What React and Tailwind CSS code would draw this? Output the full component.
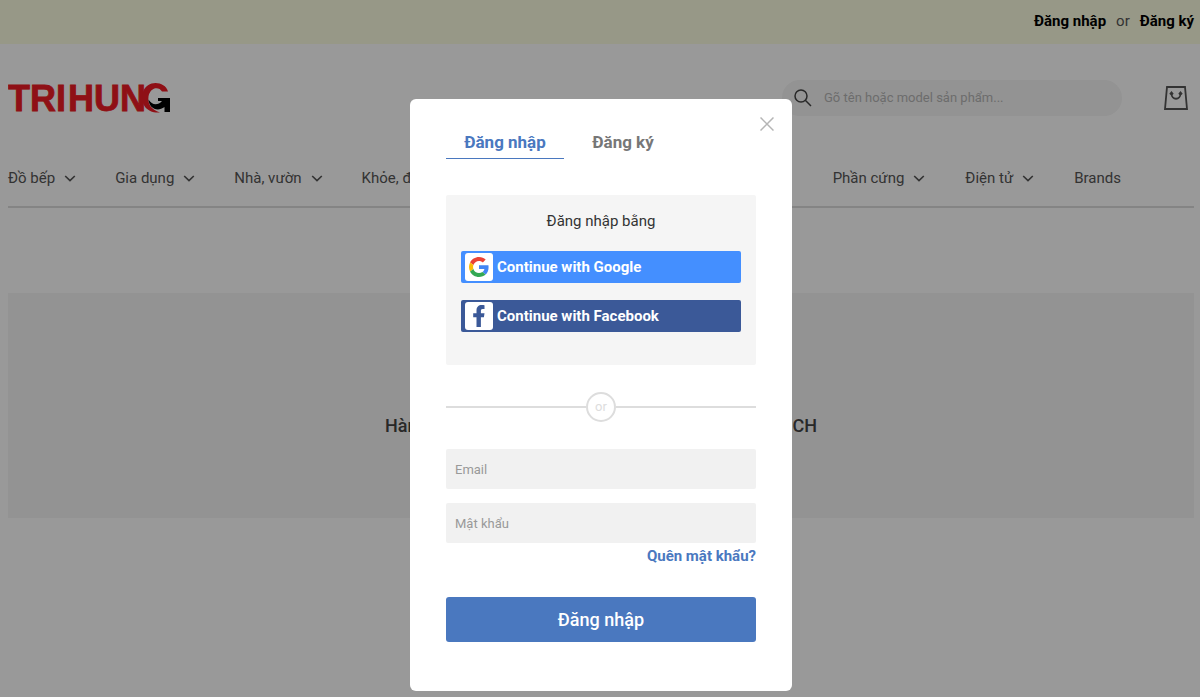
import React, { useState } from 'react';

const leftMenu = ['Đồ bếp', 'Gia dụng', 'Nhà, vườn', 'Khỏe, đẹp'];
const rightMenu = ['Phần cứng', 'Điện tử'];

function Chevron() {
  return (
    <svg className="w-3 h-3 shrink-0" viewBox="0 0 12 12" fill="none" stroke="currentColor" strokeWidth="1.6">
      <path d="M1.2 4 6 8.600l4.800-4.600" />
    </svg>
  );
}

function Logo() {
  return (
    <svg className="w-[164px] h-10" viewBox="0 0 164 40" role="img" aria-label="Tri Hung">
      <g
        fontFamily="'Liberation Sans', sans-serif"
        fontWeight="700"
        fontSize="36"
        fill="#ee1c25"
        stroke="#ee1c25"
        strokeWidth="0.8"
      >
        <text x="0" y="33">TRI</text>
        <text x="60" y="33">HUN</text>
      </g>
      <path d="M160 13.500C157 3 139 1.500 135 14C131.500 26 139 35.500 152 34.500C143 31.500 139.500 26 140.500 18.500C142 9 151 8 154 13.500Z" fill="#ee1c25" />
      <path d="M140.500 21.500C141 30 149 34.500 156.500 29V34H162V20H150V23H154C150 27.500 144 27.500 140.500 21.500Z" fill="#000" />
    </svg>
  );
}

function GoogleIcon() {
  return (
    <svg className="w-5 h-5" viewBox="0 0 48 48">
      <path fill="#EA4335" d="M24 9.500c3.540 0 6.710 1.220 9.210 3.600l6.850-6.850C35.900 2.380 30.470 0 24 0 14.620 0 6.510 5.380 2.560 13.220l7.980 6.190C12.430 13.720 17.740 9.500 24 9.500z" />
      <path fill="#4285F4" d="M46.980 24.550c0-1.570-.15-3.090-.38-4.550H24v9.020h12.940c-.58 2.960-2.260 5.480-4.780 7.180l7.730 6c4.510-4.180 7.090-10.360 7.090-17.650z" />
      <path fill="#FBBC05" d="M10.530 28.590c-.48-1.450-.76-2.990-.76-4.590s.27-3.140.76-4.590l-7.980-6.190C.92 16.460 0 20.120 0 24c0 3.880.92 7.540 2.560 10.780l7.970-6.190z" />
      <path fill="#34A853" d="M24 48c6.480 0 11.930-2.130 15.890-5.810l-7.730-6c-2.150 1.450-4.920 2.300-8.160 2.300-6.260 0-11.570-4.220-13.470-9.910l-7.980 6.190C6.510 42.620 14.620 48 24 48z" />
    </svg>
  );
}

function FacebookIcon() {
  return (
    <svg className="w-6 h-6" viewBox="0 0 24 24" fill="#3b5998">
      <path d="M9.500 23V13.200H6.200V9.300h3.300V6.400C9.500 2.900 11.500 1 14.800 1c1.300 0 2.300.1 2.700.2v3.700h-1.900c-1.400 0-1.700.8-1.700 2v2.400h3.600l-.6 3.900h-3V23z" />
    </svg>
  );
}

function SocialButton({ icon, className, children }) {
  return (
    <button
      type="button"
      className={`flex items-center gap-1 w-full h-8 px-1 rounded-xs text-white text-[15px] font-bold ${className}`}
    >
      <span className="flex items-center justify-center w-7 h-7 bg-white rounded-[3px]">{icon}</span>
      {children}
    </button>
  );
}

function LoginModal({ onClose }) {
  const [email, setEmail] = useState('');
  const [password, setPassword] = useState('');

  return (
    <div className="fixed inset-0 flex items-start justify-center pt-[99px] pl-[2px] bg-black/40 overflow-hidden">
      <div role="dialog" aria-label="Đăng nhập" className="relative w-full max-w-[382px] bg-white rounded-md px-9 pt-7 pb-[49px]">
        <button type="button" aria-label="Close" onClick={onClose} className="absolute top-[18px] right-[18px] text-[#b5b5b5]">
          <svg className="w-[14px] h-[14px]" viewBox="0 0 14 14" fill="none" stroke="currentColor" strokeWidth="1.5">
            <path d="M.5.5l13 13M13.500.5l-13 13" />
          </svg>
        </button>

        {/* Tabs */}
        <div className="flex text-[17px] leading-[30px] font-bold">
          <button type="button" className="w-[118px] pb-px border-b border-[#4a78bf] text-[#4a78bf]">Đăng nhập</button>
          <button type="button" className="w-[118px] pb-px border-b border-transparent text-[#777]">Đăng ký</button>
        </div>

        {/* Social login */}
        <div className="mt-9 px-[15px] pt-4 pb-[33px] bg-[#f5f5f5] rounded-xs">
          <p className="mb-5 text-center text-[15px] leading-5 text-[#333]">Đăng nhập bằng</p>
          <div className="space-y-[17px]">
            <SocialButton icon={<GoogleIcon />} className="bg-[#448fff]">Continue with Google</SocialButton>
            <SocialButton icon={<FacebookIcon />} className="bg-[#3b5998]">Continue with Facebook</SocialButton>
          </div>
        </div>

        {/* Divider */}
        <div className="flex items-center mt-[27px]">
          <span className="flex-1 h-[2px] bg-[#ddd]"></span>
          <span className="flex items-center justify-center w-[30px] h-[30px] rounded-full border-2 border-[#ddd] text-[13px] text-[#ddd]">or</span>
          <span className="flex-1 h-[2px] bg-[#ddd]"></span>
        </div>

        <form onSubmit={(e) => e.preventDefault()} className="mt-[27px]">
          <input
            type="email"
            aria-label="Email"
            placeholder="Email"
            value={email}
            onChange={(e) => setEmail(e.target.value)}
            className="block w-full h-10 px-[9px] rounded-xs bg-[#f1f1f1] text-[13px] placeholder:text-[#999]"
          />
          <input
            type="password"
            aria-label="Mật khẩu"
            placeholder="Mật khẩu"
            value={password}
            onChange={(e) => setPassword(e.target.value)}
            className="block w-full h-10 mt-[14px] px-[9px] rounded-xs bg-[#f1f1f1] text-[13px] placeholder:text-[#999]"
          />
          <div className="mt-[3px] text-right text-[15px] leading-5 font-bold">
            <a href="#" className="text-[#4a78bf]">Quên mật khẩu?</a>
          </div>
          <button type="submit" className="w-full h-[45px] mt-[31px] rounded-[3px] bg-[#4a78bf] text-white text-lg font-medium">
            Đăng nhập
          </button>
        </form>
      </div>
    </div>
  );
}

export default function App() {
  const [open, setOpen] = useState(true);

  return (
    <div className="min-h-screen bg-white text-[#555] font-['Roboto',sans-serif]">
      {/* Top bar */}
      <div className="flex items-center justify-end gap-[10px] h-11 pr-[6px] pb-[2px] bg-[#fcfde1] text-[15px]">
        <a href="#" onClick={() => setOpen(true)} className="font-bold text-black">Đăng nhập</a>
        <span>or</span>
        <a href="#" className="font-bold text-black">Đăng ký</a>
      </div>

      <header className="ml-2 mr-[6px]">
        <div className="flex items-center pt-[34px] pr-[6px]">
          <a href="#"><Logo /></a>
          <label className="flex items-center w-[340px] h-9 ml-auto px-3 rounded-full bg-[#f5f5f5]">
            <svg className="w-[18px] h-[18px] shrink-0" viewBox="0 0 18 18" fill="none" stroke="#444" strokeWidth="1.500">
              <circle cx="7" cy="7" r="6" />
              <path d="M11.300 11.300 17 17" />
            </svg>
            <input
              type="search"
              aria-label="Gõ tên hoặc model sản phẩm..."
              placeholder="Gõ tên hoặc model sản phẩm..."
              className="flex-1 ml-3 text-[13px] bg-transparent outline-none placeholder:text-[#b5b5b5]"
            />
          </label>
          <button type="button" aria-label="Cart" className="ml-[42px]">
            <svg className="w-6 h-6" viewBox="0 0 24 24" fill="none" stroke="#555" strokeWidth="1.800">
              <path d="M3 1h18l2 22H1z" />
              <path d="M7.500 7.500c0 7 9 7 9 0" />
              <path d="M6 8.300 7.500 6.500 9 8.300M15 8.300l1.500-1.800L18 8.300" />
            </svg>
          </button>
        </div>

        <nav className="flex justify-between mt-[46px] pt-1 pb-[18px] pr-[73px] border-b-2 border-[#ddd] text-[15px] leading-5">
          <div className="flex gap-[39px]">
            {leftMenu.map((item) => (
              <a key={item} href="#" className="flex items-center gap-[9px]">{item} <Chevron /></a>
            ))}
          </div>
          <div className="flex gap-10">
            {rightMenu.map((item) => (
              <a key={item} href="#" className="flex items-center gap-[9px]">{item} <Chevron /></a>
            ))}
            <a href="#">Brands</a>
          </div>
        </nav>
      </header>

      <main className="ml-2 mr-[6px] mt-[85px]">
        <section className="flex items-center justify-center h-[225px] pt-10 bg-[#f5f5f5]">
          <h2 className="flex justify-between w-[432px] text-lg font-medium text-[#444]">
            <span>Hàng</span>
            <span>CH</span>
          </h2>
        </section>
      </main>

      {open && <LoginModal onClose={() => setOpen(false)} />}
    </div>
  );
}
